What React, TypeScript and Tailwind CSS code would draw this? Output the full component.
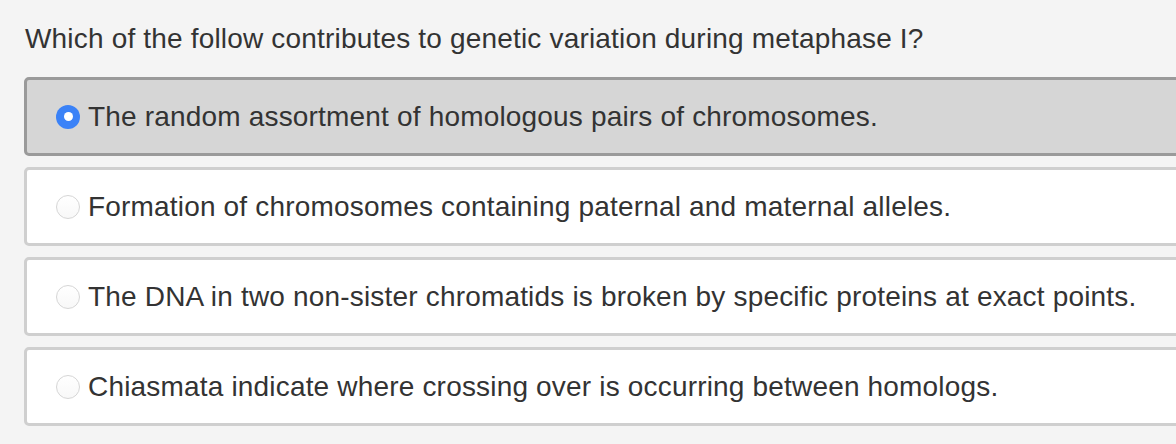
const options = [
  'The random assortment of homologous pairs of chromosomes.',
  'Formation of chromosomes containing paternal and maternal alleles.',
  'The DNA in two non-sister chromatids is broken by specific proteins at exact points.',
  'Chiasmata indicate where crossing over is occurring between homologs.',
]

function Radio({ checked }: { checked: boolean }) {
  if (checked) {
    return (
      <span className="flex h-[24px] w-[24px] shrink-0 items-center justify-center rounded-full bg-[#3b82f7]">
        <span className="h-[9px] w-[9px] rounded-full bg-white" />
      </span>
    )
  }
  return (
    <span className="h-[24px] w-[24px] shrink-0 rounded-full border border-[#d6d6d6] bg-gradient-to-b from-white to-[#f8f8f8]" />
  )
}

export default function App() {
  const selected = 0
  return (
    <div className="h-[444px] w-[1176px] overflow-hidden bg-[#f4f4f4] font-['Liberation_Sans',Arial,sans-serif] text-[#333]">
      <h1 className="pl-[25px] pt-[23px] text-[28px] leading-[32px] tracking-[0.18px]">
        Which of the follow contributes to genetic variation during metaphase I?
      </h1>
      <div className="mt-[22px] flex w-[1200px] flex-col gap-[11px] pl-[24px]">
        {options.map((o, i) => (
          <div
            key={o}
            className={`flex h-[79px] items-center gap-[8px] rounded-[5px] border-[3px] pl-[29px] ${
              i === selected ? 'border-[#9a9a9a] bg-[#d6d6d6]' : 'border-[#cfcfcf] bg-white'
            }`}
          >
            <Radio checked={i === selected} />
            <span className="text-[28px] leading-none tracking-[0.18px]">{o}</span>
          </div>
        ))}
      </div>
    </div>
  )
}
